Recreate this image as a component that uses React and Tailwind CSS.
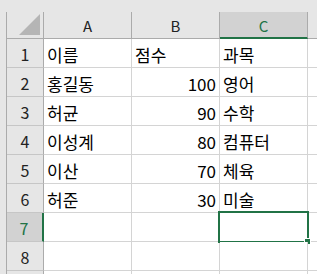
import React from "react";

const data = [
  ["이름", "점수", "과목"],
  ["홍길동", "100", "영어"],
  ["허균", "90", "수학"],
  ["이성계", "80", "컴퓨터"],
  ["이산", "70", "체육"],
  ["허준", "30", "미술"],
  ["", "", ""],
  ["", "", ""],
  ["", "", ""],
];

const font = { fontFamily: '"Noto Sans CJK KR", "Noto Sans", sans-serif' };

export default function App() {
  return (
    <div className="w-[317px] h-[274px] bg-[#e6e6e6] overflow-hidden pt-[12px] pl-[6px]" style={font}>
      <div className="border-l border-[#ababab] w-[311px]">
        <div className="flex h-[27px]">
          <div className="w-[37px] shrink-0 border-r border-b border-[#ababab] bg-[#e6e6e6] relative">
            <svg className="absolute left-0 top-0" width="36" height="26">
              <polygon points="12,23 33,23 33,2" fill="#b5b5b5" />
            </svg>
          </div>
          {["A", "B"].map((c) => (
            <div key={c} className="w-[88px] shrink-0 border-r border-b border-[#ababab] bg-[#e6e6e6] flex items-center justify-center text-[15px] text-[#222] leading-none pt-[1px]">
              {c}
            </div>
          ))}
          <div className="w-[88px] shrink-0 border-r border-[#ababab] border-b-2 border-b-[#217346] bg-[#d2d2d2] flex items-center justify-center text-[15px] text-[#217346] leading-none pt-[2px]">
            C
          </div>
          <div className="flex-1 border-b border-[#ababab] bg-[#e6e6e6]"></div>
        </div>
        {data.map((row, i) => {
          const sel = i === 6;
          const isNum = /^\d+$/.test(row[1]);
          return (
            <div key={i} className="flex h-[29px]">
              {sel ? (
                <div className="w-[37px] shrink-0 border-r-2 border-r-[#217346] border-b border-b-[#c6c6c6] bg-[#d2d2d2] flex items-center justify-center text-[16px] text-[#217346] leading-none pt-[2px] pr-[1px]">
                  {i + 1}
                </div>
              ) : (
                <div className="w-[37px] shrink-0 border-r border-r-[#ababab] border-b border-b-[#c6c6c6] bg-[#e6e6e6] flex items-center justify-center text-[16px] text-[#222] leading-none pt-[2px]">
                  {i < 8 ? i + 1 : ""}
                </div>
              )}
              <div className="w-[88px] shrink-0 border-r border-b border-[#d4d4d4] bg-white flex items-center pl-[3px] text-[17px] text-black leading-none pt-[2px]">
                {row[0]}
              </div>
              {isNum ? (
                <div className="w-[88px] shrink-0 border-r border-b border-[#d4d4d4] bg-white flex items-center justify-end pr-[3px] text-[17px] text-black leading-none pt-[2px]">
                  {row[1]}
                </div>
              ) : (
                <div className="w-[88px] shrink-0 border-r border-b border-[#d4d4d4] bg-white flex items-center pl-[3px] text-[17px] text-black leading-none pt-[2px]">
                  {row[1]}
                </div>
              )}
              <div className="w-[88px] shrink-0 border-r border-b border-[#d4d4d4] bg-white flex items-center pl-[3px] text-[17px] text-black leading-none pt-[2px] relative">
                {row[2]}
                {sel && (
                  <>
                    <div className="absolute left-[-2px] top-[-2px] w-[91px] h-[32px] border-2 border-[#217346]"></div>
                    <div className="absolute left-[84px] top-[25px] w-[7px] h-[7px] bg-[#217346] border border-white"></div>
                  </>
                )}
              </div>
              <div className="flex-1 border-b border-[#d4d4d4] bg-white"></div>
            </div>
          );
        })}
      </div>
    </div>
  );
}
